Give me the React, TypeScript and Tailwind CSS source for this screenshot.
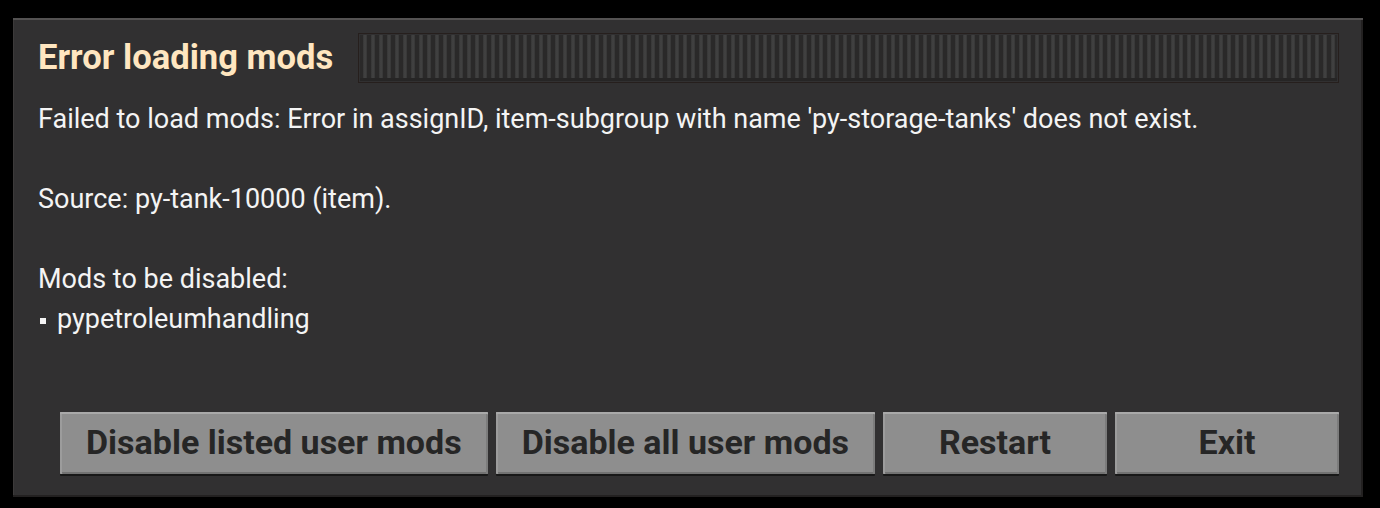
import React from "react";

const font = { fontFamily: "Roboto, 'Noto Sans', sans-serif" };

function Btn({ label, wide }: { label: string; wide?: boolean }) {
  return (
    <button
      className={
        "h-[62px] bg-[#8e8e8e] text-[#262626] font-bold text-[34px] leading-none rounded-[1px] pb-[2px] shadow-[inset_0_2px_0_#a9a9a9,inset_2px_0_0_#9c9c9c,inset_-2px_0_0_#7c7c7c,inset_0_-2px_0_#727272,0_2px_0_#181818] " +
        (wide ? "px-[26px]" : "w-[224px]")
      }
      style={font}
    >
      {label}
    </button>
  );
}

export default function App() {
  return (
    <div className="w-[1380px] h-[508px] bg-black pt-[18px] pl-[13px]" style={font}>
      <div className="w-[1350px] h-[479px] bg-[#313031] flex flex-col pl-[25px] pr-[24px] pt-[15px] pb-[23px] shadow-[inset_0_2px_0_#545252,inset_0_-2px_0_#232121,inset_-2px_0_0_#232121,inset_1px_0_0_#3c3a3a]">
        <div className="flex items-center h-[50px]">
          <div className="text-[#ffe6c0] font-bold text-[34.6px] leading-none whitespace-nowrap pb-[2px]">Error loading mods</div>
          <div className="flex-1 ml-[25px] h-[50px] border border-[#261f1d] p-[1px]">
            <div className="w-full h-full bg-[repeating-linear-gradient(90deg,#2a2929_0px,#2a2929_3px,#363636_3px,#434343_5px,#363636_7px,#2a2929_7px,#2a2929_8px)] shadow-[inset_0_-3px_0_#262525]" />
          </div>
        </div>
        <div className="mt-[16px] text-[#f4f4f4] text-[27px] leading-[40px]">
          <div>Failed to load mods: Error in assignID, item-subgroup with name 'py-storage-tanks' does not exist.</div>
          <div className="h-[40px]" />
          <div>Source: py-tank-10000 (item).</div>
          <div className="h-[40px]" />
          <div>Mods to be disabled:</div>
          <div className="flex items-center">
            <span className="inline-block w-[6px] h-[6px] bg-[#f4f4f4] ml-[2px] mr-[11px] mt-[4px]" />
            <span>pypetroleumhandling</span>
          </div>
        </div>
        <div className="flex-1" />
        <div className="flex justify-end gap-[8px]">
          <Btn label="Disable listed user mods" wide />
          <Btn label="Disable all user mods" wide />
          <Btn label="Restart" />
          <Btn label="Exit" />
        </div>
      </div>
    </div>
  );
}
